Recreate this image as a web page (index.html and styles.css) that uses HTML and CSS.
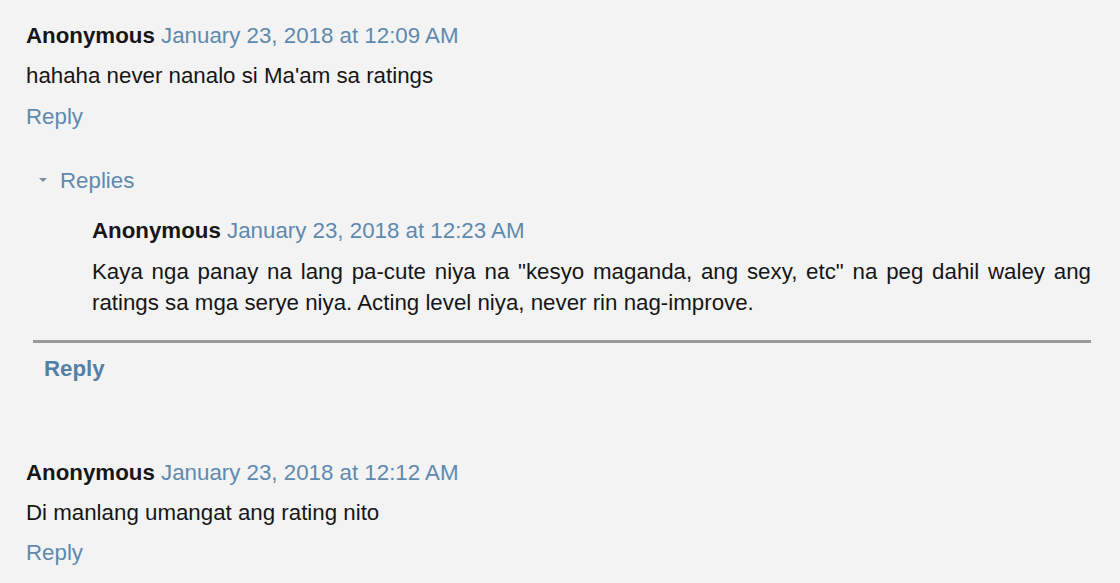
FILE: index.html
```html
<!DOCTYPE html>
<html lang="tl">
<head>
<meta charset="utf-8">
<title>Comments</title>
<link rel="stylesheet" href="styles.css">
</head>
<body>
<div class="comments">
  <div class="comment">
    <div class="comment-header"><span class="author">Anonymous</span> <a class="date" href="#">January 23, 2018 at 12:09 AM</a></div>
    <p class="comment-body">hahaha never nanalo si Ma'am sa ratings</p>
    <div class="comment-actions"><a class="reply-link" href="#">Reply</a></div>
  </div>
  <div class="thread">
    <div class="thread-toggle"><span class="caret"></span><a class="toggle-link" href="#">Replies</a></div>
    <div class="thread-replies">
      <div class="comment reply">
        <div class="comment-header"><span class="author">Anonymous</span> <a class="date" href="#">January 23, 2018 at 12:23 AM</a></div>
        <p class="comment-body justified">Kaya nga panay na lang pa-cute niya na "kesyo maganda, ang sexy, etc" na peg dahil waley ang ratings sa mga serye niya. Acting level niya, never rin nag-improve.</p>
      </div>
    </div>
    <div class="thread-continue"><a class="continue-link" href="#">Reply</a></div>
  </div>
  <div class="comment second">
    <div class="comment-header"><span class="author">Anonymous</span> <a class="date" href="#">January 23, 2018 at 12:12 AM</a></div>
    <p class="comment-body">Di manlang umangat ang rating nito</p>
    <div class="comment-actions"><a class="reply-link" href="#">Reply</a></div>
  </div>
</div>
</body>
</html>
```

FILE: styles.css
```css
html, body {
  margin: 0;
  padding: 0;
  background: #f3f3f4;
}
body {
  font-family: "Liberation Sans", Arial, sans-serif;
  font-size: 22.3px;
  color: #161616;
}
a {
  text-decoration: none;
  color: #6089ae;
}
.comments {
  padding: 16px 29px 0 26px;
}
.comment-header {
  line-height: 40px;
  white-space: nowrap;
}
.author {
  font-weight: bold;
  color: #161616;
}
.comment-body {
  margin: 0;
  line-height: 40px;
}
.comment-actions {
  line-height: 40px;
  margin-top: 1px;
}
.thread {
  margin: 24px 0 0 7px;
}
.thread-toggle {
  display: flex;
  align-items: center;
  line-height: 40px;
  padding-left: 6px;
}
.caret {
  width: 0;
  height: 0;
  border-left: 4px solid transparent;
  border-right: 4px solid transparent;
  border-top: 4px solid #7a8b9c;
  margin-right: 13px;
  margin-top: -2px;
}
.thread-replies {
  padding: 10px 0 0 59px;
}
.reply .comment-body {
  line-height: 31px;
  margin-top: 5px;
}
.justified {
  text-align: justify;
}
.thread-continue {
  margin-top: 22px;
  border-top: 3px solid #9a9a9a;
  padding: 6px 0 0 11px;
  line-height: 40px;
}
.continue-link {
  font-weight: bold;
  color: #5580a6;
}
.second {
  margin-top: 64px;
}
.second .comment-actions {
  margin-top: 0;
}
```
